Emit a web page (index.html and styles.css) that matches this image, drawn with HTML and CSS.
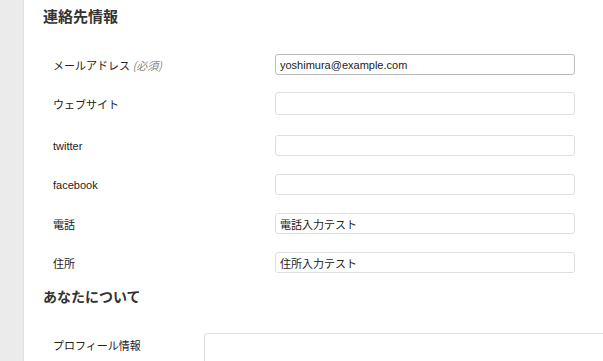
FILE: index.html
```html
<!DOCTYPE html>
<html lang="ja">
<head>
<meta charset="utf-8">
<link rel="stylesheet" href="styles.css">
</head>
<body>
<div class="layout">
  <aside class="sidebar"></aside>
  <main class="content">
    <h2 class="section-title first">連絡先情報</h2>
    <div class="form">
      <div class="row">
        <label class="label">メールアドレス <span class="req">(必須)</span></label>
        <div class="field"><input class="input input-active" type="text" value="yoshimura@example.com"></div>
      </div>
      <div class="row">
        <label class="label">ウェブサイト</label>
        <div class="field"><input class="input input-tall" type="text" value=""></div>
      </div>
      <div class="row row-gap">
        <label class="label latin">twitter</label>
        <div class="field"><input class="input" type="text" value=""></div>
      </div>
      <div class="row">
        <label class="label latin">facebook</label>
        <div class="field"><input class="input" type="text" value=""></div>
      </div>
      <div class="row">
        <label class="label">電話</label>
        <div class="field"><input class="input" type="text" value="電話入力テスト"></div>
      </div>
      <div class="row">
        <label class="label">住所</label>
        <div class="field"><input class="input" type="text" value="住所入力テスト"></div>
      </div>
    </div>
    <h2 class="section-title second">あなたについて</h2>
    <div class="profile-row">
      <label class="label profile-label">プロフィール情報</label>
      <textarea class="textarea"></textarea>
    </div>
  </main>
</div>
</body>
</html>
```

FILE: styles.css
```css
html, body {
  margin: 0;
  padding: 0;
  background: #ffffff;
  height: 100%;
  overflow: hidden;
}
body {
  font-family: "Liberation Sans", "Noto Sans CJK JP", sans-serif;
  color: #222;
  font-size: 11px;
}
.layout {
  display: flex;
  height: 361px;
  overflow: hidden;
}
.sidebar {
  width: 23px;
  flex: 0 0 23px;
  background: #ebebeb;
  border-right: 1px solid #e0e0e0;
  box-shadow: 1px 0 3px rgba(0,0,0,0.12);
}
.content {
  flex: 1;
  height: 361px;
  box-sizing: border-box;
  padding: 6px 0 0 19px;
  background: #fff;
  min-width: 0;
  overflow: hidden;
}
.section-title {
  margin: 0;
  font-size: 14px;
  line-height: 20px;
  font-weight: bold;
  color: #333;
  font-family: "Noto Sans CJK JP", sans-serif;
}
.section-title.first {
  font-size: 15px;
}
.section-title.second {
  margin-top: 4px;
}
.form {
  margin-top: 19px;
}
.row {
  display: flex;
  align-items: center;
  height: 39px;
}
.row-gap {
  margin-top: 3px;
}
.label {
  width: 222px;
  flex: 0 0 222px;
  padding-left: 10px;
  font-size: 11px;
  color: #222;
  font-family: "Noto Sans CJK JP", sans-serif;
}
.label.latin {
  font-family: "Liberation Sans", sans-serif;
}
.req {
  font-style: italic;
  color: #888;
}
.field {
  display: flex;
}
.input {
  box-sizing: border-box;
  width: 300px;
  height: 21px;
  margin: 0;
  padding: 0 4px;
  border: 1px solid #dfdfdf;
  border-radius: 3px;
  background: #fff;
  font-family: "Liberation Sans", "Noto Sans CJK JP", sans-serif;
  font-size: 11px;
  color: #222;
  outline: none;
}
.input-active {
  border-color: #bbbbbb;
}
.input-tall {
  height: 23px;
}
.profile-row {
  display: flex;
  align-items: flex-start;
  margin-top: 19px;
}
.profile-label {
  width: 151px;
  flex: 0 0 151px;
  padding-top: 12px;
}
.textarea {
  box-sizing: border-box;
  width: 420px;
  height: 60px;
  margin: 8px 0 0 0;
  border: 1px solid #dfdfdf;
  border-radius: 3px;
  resize: none;
  outline: none;
  flex: 0 0 auto;
}
```
